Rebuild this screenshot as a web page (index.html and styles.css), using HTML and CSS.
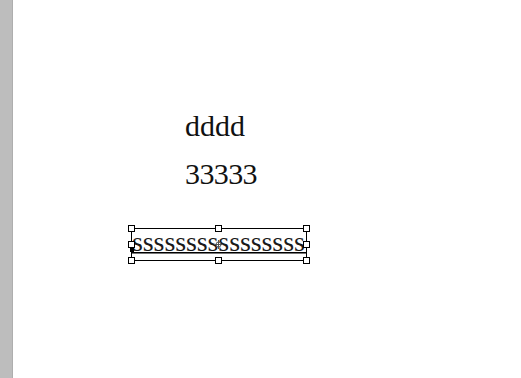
FILE: index.html
```html
<!DOCTYPE html>
<html>
<head>
<meta charset="utf-8">
<link rel="stylesheet" href="styles.css">
</head>
<body>
<div class="app">
  <div class="sidebar"></div>
  <div class="canvas">
    <div class="story">
      <div class="line">dddd</div>
      <div class="line digits">33333</div>
    </div>
    <div class="frame">
      <div class="frame-text">ssssssssssssssss</div>
      <div class="baseline"></div>
      <span class="handle h-tl"></span>
      <span class="handle h-tm"></span>
      <span class="handle h-tr"></span>
      <span class="handle h-ml"></span>
      <span class="handle h-mr"></span>
      <span class="handle h-bl"></span>
      <span class="handle h-bm"></span>
      <span class="handle h-br"></span>
      <span class="port"></span>
      <svg class="center-mark" width="9" height="9" viewBox="0 0 9 9">
        <circle cx="4.5" cy="4.5" r="2.5" fill="#fff" stroke="#555" stroke-width="1"/>
        <path d="M4.5 0V9M0 4.5H9" stroke="#555" stroke-width="1"/>
      </svg>
    </div>
  </div>
</div>
</body>
</html>
```
FILE: styles.css
```css
html, body {
  margin: 0;
  padding: 0;
  background: #fff;
}
.app {
  display: flex;
  width: 521px;
  height: 378px;
  overflow: hidden;
}
.sidebar {
  width: 12px;
  flex: none;
  background: #bdbdbd;
  border-right: 1px solid #aeaeae;
}
.canvas {
  flex: 1;
  background: #fff;
  padding-top: 102px;
  font-family: "Liberation Serif", "Times New Roman", serif;
  color: #111;
}
.story {
  margin-left: 172px;
  font-size: 30px;
  line-height: 48px;
}
.digits {
  letter-spacing: -0.6px;
}
.frame {
  position: relative;
  margin-top: 30px;
  margin-left: 118px;
  width: 174px;
  height: 31px;
  border: 1px solid #000;
}
.frame-text {
  font-size: 28px;
  line-height: 26px;
  white-space: nowrap;
  color: #1a1a1a;
  letter-spacing: -0.1px;
}
.baseline {
  position: absolute;
  left: 0;
  right: 0;
  top: 23px;
  height: 1px;
  background: #000;
  border-bottom: 1px solid #777;
}
.handle {
  position: absolute;
  width: 5px;
  height: 5px;
  background: #fff;
  border: 1px solid #000;
}
.h-tl { left: -4px; top: -4px; }
.h-tm { left: 83px; top: -4px; }
.h-tr { right: -4px; top: -4px; }
.h-ml { left: -4px; top: 12px; }
.h-mr { right: -4px; top: 12px; }
.h-bl { left: -4px; bottom: -4px; }
.h-bm { left: 83px; bottom: -4px; }
.h-br { right: -4px; bottom: -4px; }
.port {
  position: absolute;
  left: -2px;
  top: 19px;
  width: 4px;
  height: 4px;
  background: #000;
}
.center-mark {
  position: absolute;
  left: 82px;
  top: 11px;
}
```
